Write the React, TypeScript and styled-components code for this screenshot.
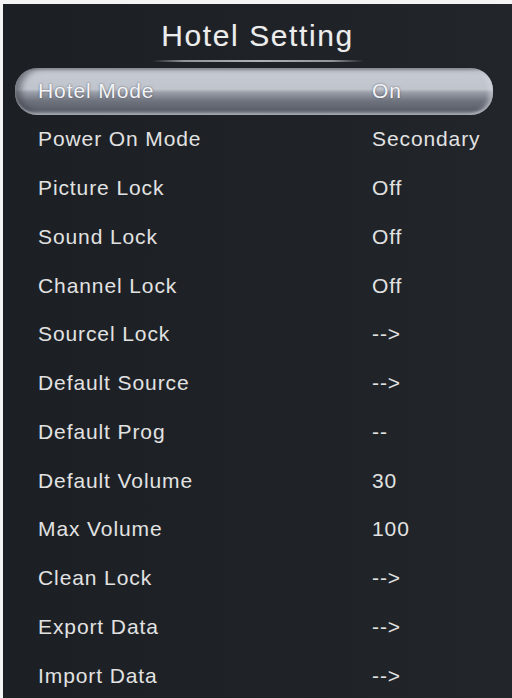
import React from "react";
import styled, { createGlobalStyle } from "styled-components";

const GlobalStyle = createGlobalStyle`
  html, body {
    margin: 0;
    padding: 0;
    background: #f4f4f4;
  }
  body {
    font-family: "Liberation Sans", Arial, sans-serif;
  }
`;

const Panel = styled.div`
  margin: 4px 0 0 3px;
  height: 694px;
  background: linear-gradient(90deg, #1c2024 0%, #1f2328 60%, #22262b 100%);
  display: flex;
  flex-direction: column;
  overflow: hidden;
`;

const Header = styled.div`
  display: flex;
  flex-direction: column;
  align-items: center;
  padding-top: 12px;
`;

const Title = styled.h1`
  margin: 0;
  height: 40px;
  line-height: 40px;
  font-size: 30px;
  font-weight: normal;
  letter-spacing: 1.6px;
  color: #ededed;
  text-shadow: 0 0 1px rgba(255, 255, 255, 0.25);
`;

const Underline = styled.div`
  margin-top: 4px;
  width: 212px;
  height: 2px;
  background: linear-gradient(
    90deg,
    rgba(140, 145, 152, 0) 0%,
    #8f949b 15%,
    #aeb2b8 50%,
    #8f949b 85%,
    rgba(140, 145, 152, 0) 100%
  );
`;

const List = styled.div`
  margin-top: 5.5px;
  padding: 0 19px 0 12px;
  display: flex;
  flex-direction: column;
`;

const Row = styled.div<{ $active?: boolean }>`
  height: 48.75px;
  box-sizing: border-box;
  display: grid;
  grid-template-columns: 334px 1fr;
  align-items: center;
  padding-left: 23px;
  font-size: 21px;
  letter-spacing: 0.9px;
  color: #e2e2e2;
  border-radius: 22px;
  ${({ $active }) =>
    $active &&
    `
    height: 47.5px;
    color: #f4f5f8;
    text-shadow: 0 0 2px rgba(60, 64, 72, 0.8);
    background: linear-gradient(
      180deg,
      #8e929c 0%,
      #c6cad2 8%,
      #c0c4cd 45%,
      #9a9ea8 52%,
      #6f737e 70%,
      #5e626d 88%,
      #8a8e99 100%
    );
    box-shadow: inset 0 -2px 2px rgba(200, 204, 212, 0.5),
      inset 6px 0 6px rgba(60, 63, 72, 0.6),
      inset -4px 0 4px rgba(220, 222, 228, 0.5);
  `}
`;

const Label = styled.span``;

const Value = styled.span``;

const items: [string, string][] = [
  ["Hotel Mode", "On"],
  ["Power On Mode", "Secondary"],
  ["Picture Lock", "Off"],
  ["Sound Lock", "Off"],
  ["Channel Lock", "Off"],
  ["Sourcel Lock", "-->"],
  ["Default Source", "-->"],
  ["Default Prog", "--"],
  ["Default Volume", "30"],
  ["Max Volume", "100"],
  ["Clean Lock", "-->"],
  ["Export Data", "-->"],
  ["Import Data", "-->"],
];

const App = () => {
  return (
    <>
      <GlobalStyle />
      <Panel>
        <Header>
          <Title>Hotel Setting</Title>
          <Underline />
        </Header>
        <List>
          {items.map(([label, value], index) => (
            <Row key={label} $active={index === 0}>
              <Label>{label}</Label>
              <Value>{value}</Value>
            </Row>
          ))}
        </List>
      </Panel>
    </>
  );
};

export default App;
